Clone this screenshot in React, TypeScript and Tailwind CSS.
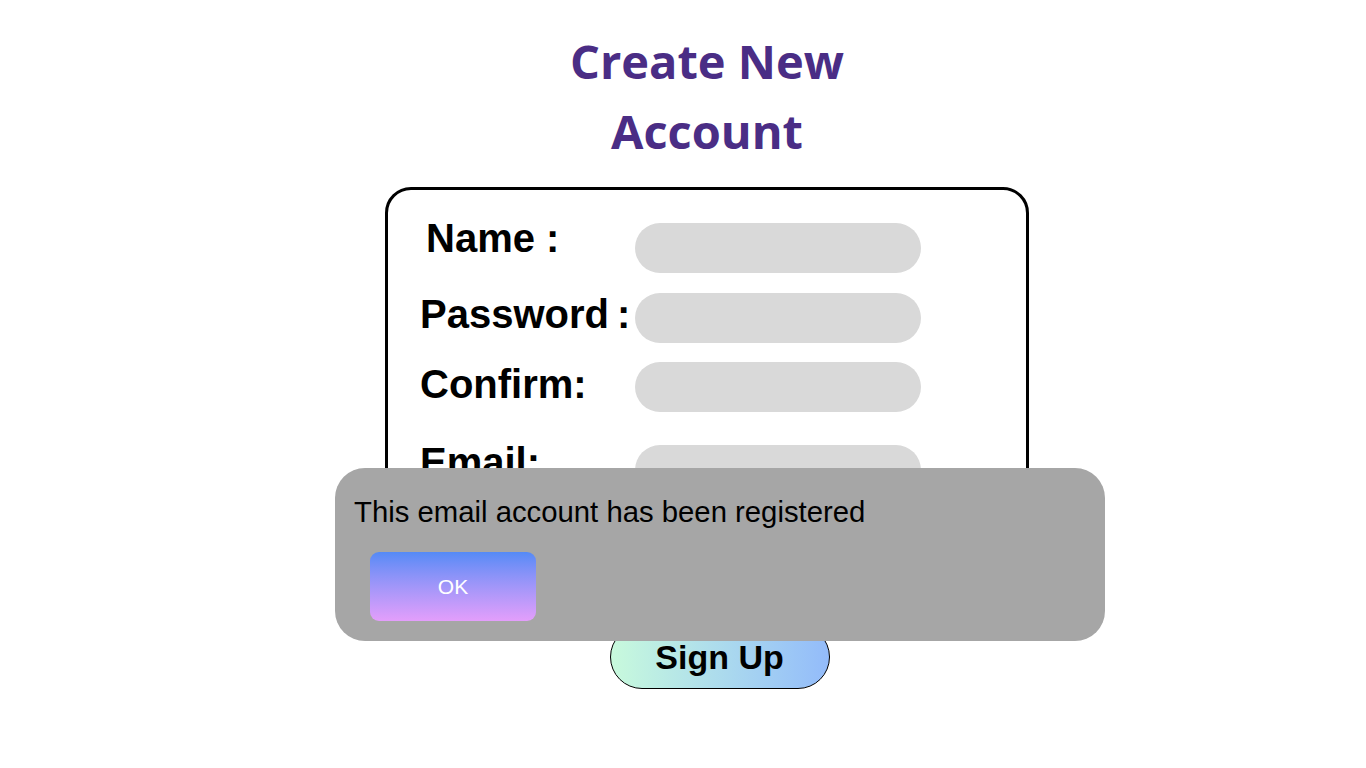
import React from 'react';

const rows = [
    { label: 'Name :', top: 'mt-0', labelClass: 'pl-1.5 -mt-[5px]' },
    { label: 'Password\u2009:', top: 'mt-5', labelClass: 'mt-px' },
    { label: 'Confirm:', top: 'mt-[19px]', labelClass: 'mt-0.5' },
    { label: 'Email:', top: 'mt-[33px]', labelClass: '-mt-[3px]' },
];

export default function App() {
    return (
        <div className="relative w-full h-[768px] bg-white overflow-hidden font-['Liberation_Sans',Arial,sans-serif]">
            <div className="flex flex-col items-center">
                <h1 className="mt-[26px] ml-[48px] text-center text-[47px] leading-[70px] font-bold text-[#4a2d85] font-['Open_Sans',sans-serif]">
                    Create New
                    <br />
                    Account
                </h1>

                <div className="mt-[21px] ml-[48px] w-[644px] h-[410px] border-[3px] border-black rounded-[26px] pt-[33px] pl-[32px]">
                    {rows.map((row) => (
                        <div key={row.label} className={`flex items-start ${row.top}`}>
                            <label className={`w-[215px] text-[40px] leading-[40px] font-bold text-black whitespace-nowrap ${row.labelClass}`}>
                                {row.label}
                            </label>
                            <div className="w-[286px] h-[50px] rounded-full bg-[#d9d9d9]" />
                        </div>
                    ))}
                </div>

                <button className="mt-[28px] ml-[73px] w-[220px] h-[64px] rounded-full border border-black bg-gradient-to-r from-[#c8fadc] to-[#93bbfa] text-[34px] leading-[40px] font-bold text-black">
                    Sign Up
                </button>
            </div>

            {/* alert dialog */}
            <div className="absolute left-[335px] top-[468px] w-[770px] h-[173px] rounded-[30px] bg-[#a6a6a6] pt-[28px] pl-[19px]">
                <p className="text-[29.3px] leading-[32px] text-black">This email account has been registered</p>
                <button className="mt-[24px] ml-[16px] w-[166px] h-[69px] rounded-[9px] bg-gradient-to-b from-[#548af6] to-[#e39efb] text-white text-[21px]">
                    OK
                </button>
            </div>
        </div>
    );
}
